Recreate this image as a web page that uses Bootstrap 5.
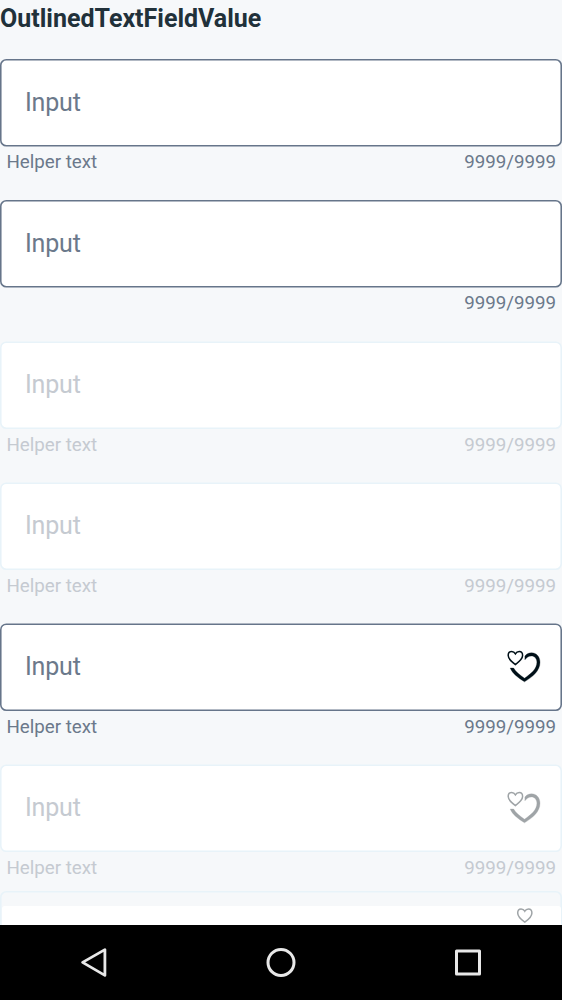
<!DOCTYPE html>
<html lang="en">
<head>
<meta charset="utf-8">
<meta name="viewport" content="width=device-width, initial-scale=1">
<title>OutlinedTextFieldValue</title>
<link href="https://cdn.jsdelivr.net/npm/bootstrap@5.3.0/dist/css/bootstrap.min.css" rel="stylesheet">
<style>
body{background:#f6f8fa;font-family:Roboto,sans-serif;color:#6b798b}
.screen{height:925px}
.heading{font-size:25px;line-height:36px;font-weight:700;color:#21313a;padding-top:1px;margin-bottom:22px}
.field{height:141.1px}
.box{height:88px;padding:0 21px 0 25px;font-size:25px;line-height:30px;letter-spacing:-.2px}
.outline{position:absolute;inset:0;width:100%;height:100%}
.outline rect{width:calc(100% - 1.56px);height:86px;fill:#fff;stroke:#66758a;stroke-width:1.56px}
.box>span,.box>.hearts{position:relative}
.hearts{width:36px;height:36px;margin-bottom:2px;color:#001018}
.notes{padding:4.4px 6px 0 6.5px;font-size:18.75px;line-height:22px;letter-spacing:-.03px}
.off{color:#c5cad1}
.off .outline rect{stroke:#e8f3f9}
.off .hearts{color:#9fa4a7}
.cut .outline rect{fill:#f6f8fa}
.fill{position:absolute;left:1.5px;right:1.5px;top:15px;height:60px;background:#fff;border-radius:3px}
.cut .hearts-cut{position:absolute;left:515px;top:16px;width:20px;height:18px;color:#9fa4a7}
.navkeys{height:75px;background:#000;padding-bottom:1px}
</style>
</head>
<body>
<svg width="0" height="0" class="position-absolute">
<symbol id="small" viewBox="0 0 20 18"><path d="M9.8 15.2C5.6 12.2 2.7 9.5 2.7 6C2.7 3.6 4.1 2 6.1 2C7.7 2 9 2.8 9.8 4.2C10.6 2.8 11.9 2 13.5 2C15.5 2 16.9 3.6 16.9 6C16.9 9.5 14 12.2 9.8 15.2Z" fill="none" stroke="currentColor" stroke-width="1.5"/></symbol>
<symbol id="hearts" viewBox="0 0 36 36"><path d="M10.4 16.6C6.3 13.6 3.2 11 3.2 7.6C3.2 5.2 4.5 3.6 6.5 3.6C8.2 3.6 9.6 4.4 10.4 5.8C11.2 4.4 12.6 3.6 14.3 3.6C16.3 3.6 17.6 5.2 17.6 7.6C17.6 11 14.5 13.6 10.4 16.6Z" fill="none" stroke="currentColor" stroke-width="1.5"/><path d="M19.9 8.2C21.6 6.1 24 5 26.5 5C31.5 5 35 9 35 14.5C35 23.3 27.5 29 19.5 34C13 29.8 7.4 25.7 5.2 20.2H8.6C10.8 24 14.8 27.2 19.5 30.4C26.3 25.7 31.9 21 31.9 14.5C31.9 10.8 29.6 8.2 26.3 8.2C23.8 8.2 21.7 9.5 19.9 12Z" fill="currentColor" stroke="currentColor" stroke-width=".3" transform="translate(0 -.2)"/></symbol>
</svg>
<main class="screen overflow-hidden">
<h1 class="heading">OutlinedTextFieldValue</h1>
<div class="field"><div class="box position-relative d-flex align-items-center"><svg class="outline"><rect x=".78" y=".78" rx="5.5"/></svg><span>Input</span></div><div class="notes d-flex justify-content-between"><span>Helper text</span><span>9999/9999</span></div></div>
<div class="field"><div class="box position-relative d-flex align-items-center"><svg class="outline"><rect x=".78" y=".78" rx="5.5"/></svg><span>Input</span></div><div class="notes d-flex justify-content-end"><span>9999/9999</span></div></div>
<div class="field off"><div class="box position-relative d-flex align-items-center"><svg class="outline"><rect x=".78" y="1.2" rx="5.5"/></svg><span>Input</span></div><div class="notes d-flex justify-content-between"><span>Helper text</span><span>9999/9999</span></div></div>
<div class="field off"><div class="box position-relative d-flex align-items-center"><svg class="outline"><rect x=".78" y="1.2" rx="5.5"/></svg><span>Input</span></div><div class="notes d-flex justify-content-between"><span>Helper text</span><span>9999/9999</span></div></div>
<div class="field"><div class="box position-relative d-flex align-items-center justify-content-between"><svg class="outline"><rect x=".78" y="1.2" rx="5.5"/></svg><span>Input</span><svg class="hearts"><use href="#hearts"/></svg></div><div class="notes d-flex justify-content-between"><span>Helper text</span><span>9999/9999</span></div></div>
<div class="field off" style="height:126.6px"><div class="box position-relative d-flex align-items-center justify-content-between"><svg class="outline"><rect x=".78" y="1.3" rx="5.5"/></svg><span>Input</span><svg class="hearts"><use href="#hearts"/></svg></div><div class="notes d-flex justify-content-between"><span>Helper text</span><span>9999/9999</span></div></div>
<div class="field off cut"><div class="box position-relative"><svg class="outline"><rect x=".78" y=".78" rx="5.5"/></svg><div class="fill"></div><svg class="hearts-cut"><use href="#small"/></svg></div></div>
</main>
<nav class="navkeys d-flex align-items-center justify-content-around">
<svg width="40" height="40" fill="none" stroke="#e8e8e8" stroke-width="2.8" stroke-linejoin="round"><path d="M8.6 20.4L30.9 7.6V33.4Z"/></svg>
<svg width="40" height="40" fill="none" stroke="#e8e8e8" stroke-width="3"><circle cx="20" cy="20.4" r="13"/></svg>
<svg width="40" height="40" fill="none" stroke="#e8e8e8" stroke-width="3" stroke-linejoin="round"><rect x="8.5" y="8.9" width="23" height="23"/></svg>
</nav>
<script src="https://cdn.jsdelivr.net/npm/bootstrap@5.3.0/dist/js/bootstrap.bundle.min.js"></script>
</body>
</html>
